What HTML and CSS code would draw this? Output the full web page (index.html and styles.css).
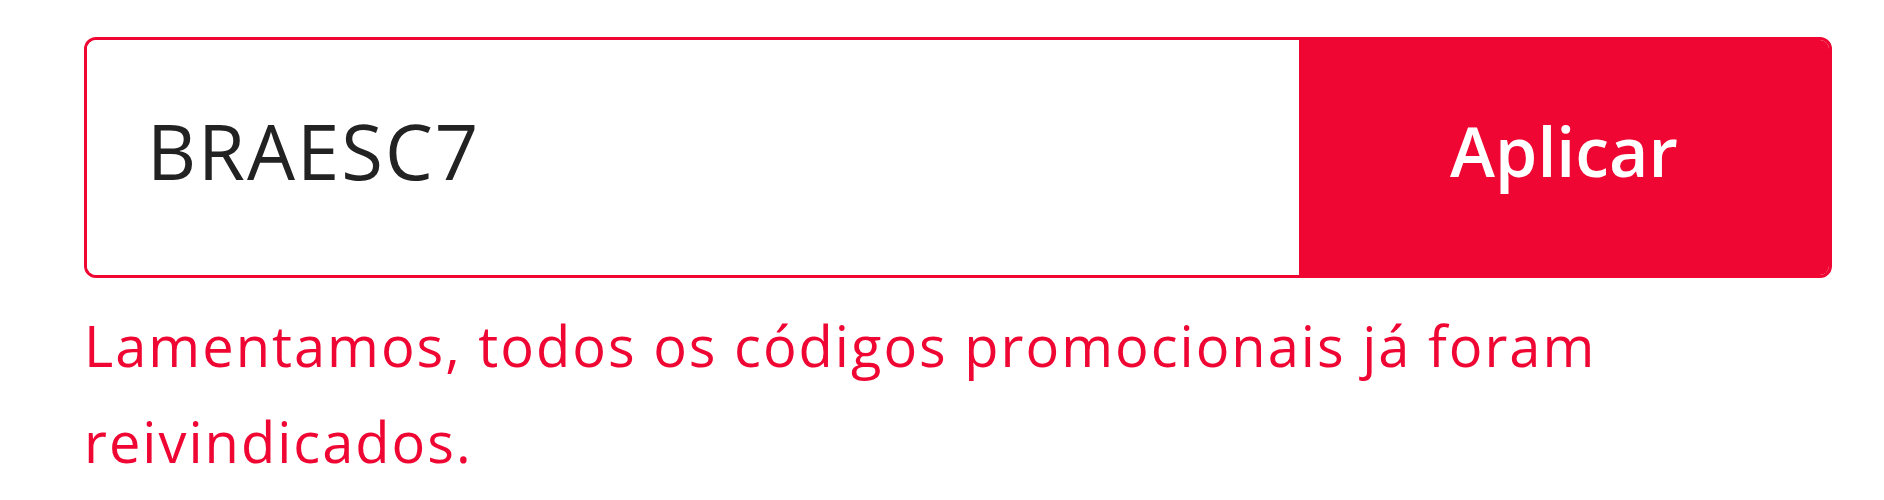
FILE: index.html
```html
<!DOCTYPE html>
<html lang="pt-BR">
<head>
  <meta charset="UTF-8" />
  <meta name="viewport" content="width=device-width, initial-scale=1.0" />
  <title>Código promocional</title>
  <link rel="stylesheet" href="styles.css">
</head>
<body>
  <div class="promo">
    <form class="promo-form">
      <input class="promo-input" type="text" value="BRAESC7" />
      <button class="promo-btn" type="button">Aplicar</button>
    </form>
    <p class="promo-error">Lamentamos, todos os códigos promocionais já foram reivindicados.</p>
  </div>
</body>
</html>
```

FILE: styles.css
```css
body {
  background: #ffffff;
  margin: 0;
  padding: 0;
  font-family: "Open Sans", "Liberation Sans", sans-serif;
}
.promo {
  padding: 37px 52px 0 84px;
}
.promo-form {
  display: flex;
  height: 241px;
  margin: 0;
  border: 3px solid #ef0633;
  border-radius: 12px;
  overflow: hidden;
  box-sizing: border-box;
}
.promo-input {
  flex: 1;
  min-width: 0;
  border: none;
  outline: none;
  padding: 0 0 14px 60px;
  font-family: "Open Sans", "Liberation Sans", sans-serif;
  font-size: 76px;
  font-weight: 500;
  letter-spacing: 2px;
  color: #222222;
  background: #ffffff;
}
.promo-btn {
  width: 530px;
  border: none;
  padding: 0 0 14px 0;
  background: #ef0633;
  color: #ffffff;
  font-family: "Open Sans", "Liberation Sans", sans-serif;
  font-size: 68px;
  font-weight: 600;
  cursor: pointer;
}
.promo-error {
  margin: 19px 0 0 0;
  color: #ef0633;
  font-size: 56px;
  font-weight: 500;
  letter-spacing: 2px;
  line-height: 96px;
}
```
